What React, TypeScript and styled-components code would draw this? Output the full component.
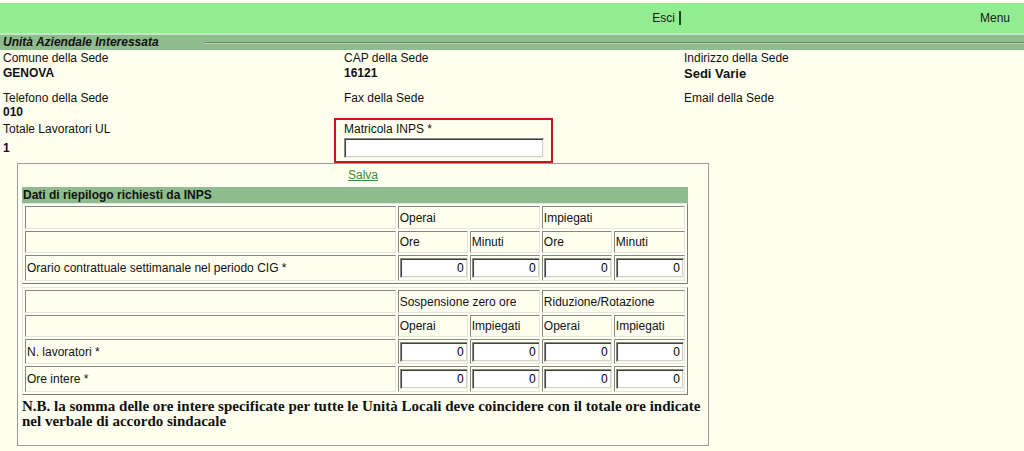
import styled, { createGlobalStyle } from 'styled-components'

const GlobalStyle = createGlobalStyle`
  html, body {
    margin: 0;
    padding: 0;
    background: #fffff0;
  }
  body {
    font-family: "Liberation Sans", Arial, sans-serif;
    font-size: 12px;
    color: #000;
  }
`

const Page = styled.div`
  width: 1024px;
  height: 451px;
  overflow: hidden;
  background: #fffff0;
`

const TopBar = styled.div`
  margin-top: 3px;
  height: 30px;
  background: #90ee90;
  display: grid;
  grid-template-columns: 683px 1fr;
  align-items: center;
`

const TopCell = styled.div<{ $pad: number }>`
  text-align: right;
  padding-right: ${p => p.$pad}px;
  color: #1a1a1a;
  line-height: 15px;
`

const Pipe = styled.span`
  display: inline-block;
  margin-left: 4px;
  width: 2px;
  height: 14px;
  background: #2a3a2a;
  vertical-align: middle;
`

const LightStrip = styled.div`
  height: 2px;
  background: #bfe9bf;
`

const SectionBar = styled.div`
  height: 15px;
  background: #8fbc8f;
  display: flex;
  align-items: center;
`

const SectionTitle = styled.div`
  width: 205px;
  padding-left: 3px;
  box-sizing: border-box;
  font-weight: bold;
  font-style: italic;
  color: #111;
  line-height: 15px;
`

const SectionRule = styled.div`
  flex: 1;
  height: 0;
  border-top: 1px solid #6d8a6d;
  border-bottom: 1px solid #b7d4b7;
`

const Fields = styled.div`
  display: grid;
  grid-template-columns: 341px 340px 1fr;
  padding-left: 3px;
  margin-top: 1px;
`

const Field = styled.div<{ $gap?: number; $top?: number }>`
  display: flex;
  flex-direction: column;
  padding-top: ${p => p.$top ?? 0}px;
  margin-bottom: ${p => p.$gap ?? 0}px;
`

const Label = styled.div`
  line-height: 15px;
  color: #111;
`

const Value = styled.div<{ $size?: number; $lh?: number; $mt?: number }>`
  font-weight: bold;
  font-size: ${p => p.$size ?? 12}px;
  line-height: ${p => p.$lh ?? 15}px;
  margin-top: ${p => p.$mt ?? 0}px;
  color: #111;
`

const RequiredBox = styled.div`
  margin-left: -10px;
  width: 219px;
  box-sizing: border-box;
  border: 2px solid #c8141c;
  padding: 2px 7px 3px 8px;
  display: flex;
  flex-direction: column;
`

const TextInput = styled.input`
  margin: 1px 0 0;
  width: 200px;
  height: 20px;
  box-sizing: border-box;
  border: 1px solid;
  border-color: #8a8a8a #f4f4f4 #f4f4f4 #8a8a8a;
  box-shadow: inset 1px 1px 0 #404040, inset -1px -1px 0 #d4d0c8;
  background: #fff;
  font: 12px "Liberation Sans", Arial, sans-serif;
  padding: 0 3px;
  outline: none;
`

const Box = styled.div`
  margin-left: 17px;
  width: 692px;
  box-sizing: border-box;
  border: 1px solid #9c9c9c;
  padding: 4px 0 16px 4px;
`

const SaveLink = styled.a`
  display: block;
  text-align: center;
  line-height: 15px;
  color: #3a8a3a;
  text-decoration: underline;
  padding-right: 4px;
`

const BoxHeader = styled.div`
  margin-top: 4px;
  width: 666px;
  height: 16px;
  background: #8fbc8f;
  font-weight: bold;
  line-height: 16px;
  padding-left: 1px;
  box-sizing: border-box;
  color: #111;
`

const Table = styled.table<{ $mt?: number }>`
  margin-top: ${p => p.$mt ?? 0}px;
  width: 666px;
  table-layout: fixed;
  border-collapse: separate;
  border-spacing: 2px;
  border: 1px solid;
  border-color: #e4e4e4 #7c7c7c #7c7c7c #e4e4e4;
`

const Cell = styled.td`
  border: 1px solid;
  border-color: #868686 #e6e6e0 #e6e6e0 #868686;
  padding: 0 1px;
  color: #111;
  white-space: nowrap;
  overflow: hidden;
`

const Row = styled.tr<{ $h: number }>`
  height: ${p => p.$h}px;
`

const NumInput = styled.input`
  display: block;
  width: 68px;
  height: 20px;
  box-sizing: border-box;
  margin: 0;
  border: 1px solid;
  border-color: #8a8a8a #f4f4f4 #f4f4f4 #8a8a8a;
  box-shadow: inset 1px 1px 0 #404040, inset -1px -1px 0 #d4d0c8;
  background: #fff;
  text-align: right;
  font: 12px "Liberation Sans", Arial, sans-serif;
  padding: 0 3px;
  outline: none;
`

const Note = styled.p`
  margin: 4px 0 0 0;
  font-family: "Liberation Serif", "Times New Roman", serif;
  font-weight: bold;
  font-size: 15px;
  line-height: 15px;
  color: #111;
`

type HeadCell = { text: string; span?: number }

function Cols() {
  return (
    <colgroup>
      <col style={{ width: 365 }} />
      <col style={{ width: 69 }} />
      <col style={{ width: 69 }} />
      <col style={{ width: 69 }} />
      <col style={{ width: 70 }} />
    </colgroup>
  )
}

function HeadRow({ cells, h }: { cells: HeadCell[]; h: number }) {
  return (
    <Row $h={h}>
      {cells.map((c, i) => (
        <Cell key={i} colSpan={c.span}>{c.text}</Cell>
      ))}
    </Row>
  )
}

function InputRow({ label, h }: { label: string; h: number }) {
  return (
    <Row $h={h}>
      <Cell>{label}</Cell>
      {[0, 1, 2, 3].map(i => (
        <Cell key={i}>
          <NumInput defaultValue="0" />
        </Cell>
      ))}
    </Row>
  )
}

export default function App() {
  return (
    <Page>
      <GlobalStyle />
      <TopBar>
        <TopCell $pad={2}>Esci<Pipe /></TopCell>
        <TopCell $pad={14}>Menu</TopCell>
      </TopBar>
      <LightStrip />
      <SectionBar>
        <SectionTitle>Unità Aziendale Interessata</SectionTitle>
        <SectionRule />
      </SectionBar>

      <Fields>
        <Field $gap={10}>
          <Label>Comune della Sede</Label>
          <Value>GENOVA</Value>
        </Field>
        <Field $gap={10}>
          <Label>CAP della Sede</Label>
          <Value>16121</Value>
        </Field>
        <Field $gap={10}>
          <Label>Indirizzo della Sede</Label>
          <Value $size={13}>Sedi Varie</Value>
        </Field>

        <Field>
          <Label>Telefono della Sede</Label>
          <Value $lh={12}>010</Value>
        </Field>
        <Field>
          <Label>Fax della Sede</Label>
        </Field>
        <Field>
          <Label>Email della Sede</Label>
        </Field>

        <Field $top={4}>
          <Label>Totale Lavoratori UL</Label>
          <Value $mt={4}>1</Value>
        </Field>
        <Field>
          <RequiredBox>
            <Label>Matricola INPS *</Label>
            <TextInput />
          </RequiredBox>
        </Field>
        <Field />
      </Fields>

      <Box>
        <SaveLink href="#">Salva</SaveLink>
        <BoxHeader>Dati di riepilogo richiesti da INPS</BoxHeader>
        <Table>
          <Cols />
          <tbody>
            <HeadRow h={23} cells={[{ text: '' }, { text: 'Operai', span: 2 }, { text: 'Impiegati', span: 2 }]} />
            <HeadRow h={22} cells={[{ text: '' }, { text: 'Ore' }, { text: 'Minuti' }, { text: 'Ore' }, { text: 'Minuti' }]} />
            <InputRow h={26} label="Orario contrattuale settimanale nel periodo CIG *" />
          </tbody>
        </Table>
        <Table $mt={3}>
          <Cols />
          <tbody>
            <HeadRow h={23} cells={[{ text: '' }, { text: 'Sospensione zero ore', span: 2 }, { text: 'Riduzione/Rotazione', span: 2 }]} />
            <HeadRow h={22} cells={[{ text: '' }, { text: 'Operai' }, { text: 'Impiegati' }, { text: 'Operai' }, { text: 'Impiegati' }]} />
            <InputRow h={25} label="N. lavoratori *" />
            <InputRow h={26} label="Ore intere *" />
          </tbody>
        </Table>
        <Note>
          N.B. la somma delle ore intere specificate per tutte le Unità Locali deve coincidere con il totale ore indicate
          <br />
          nel verbale di accordo sindacale
        </Note>
      </Box>
    </Page>
  )
}
